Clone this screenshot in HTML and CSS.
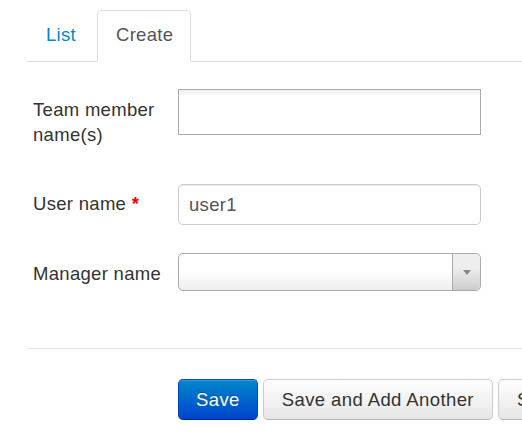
FILE: index.html
```html
<!DOCTYPE html>
<html>
<head>
<meta charset="utf-8">
<link rel="stylesheet" href="styles.css">
</head>
<body>
<div class="page">
  <ul class="tabs">
    <li class="tab"><a href="#">List</a></li>
    <li class="tab active"><a href="#">Create</a></li>
  </ul>
  <form class="form">
    <div class="group group-first">
      <label class="label">Team member name(s)</label>
      <div class="tags-box"></div>
    </div>
    <div class="group group-second">
      <label class="label label-user">User name <span class="req">*</span></label>
      <div class="text-input">user1</div>
    </div>
    <div class="group">
      <label class="label">Manager name</label>
      <div class="select-box">
        <span class="select-value"></span>
        <span class="select-arrow"><span class="tri"></span></span>
      </div>
    </div>
    <div class="actions">
      <button type="button" class="btn btn-primary">Save</button>
      <button type="button" class="btn">Save and Add Another</button>
      <button type="button" class="btn">Save and Continue Editing</button>
    </div>
  </form>
</div>
</body>
</html>
```
FILE: styles.css
```css
html, body {
  margin: 0;
  padding: 0;
  overflow: hidden;
  background: #fff;
}
body {
  font-family: "Liberation Sans", Arial, sans-serif;
  font-size: 18.5px;
  line-height: 25px;
  letter-spacing: 0.3px;
  color: #333;
}
.page {
  padding: 10px 0 0 27px;
}
.tabs {
  display: flex;
  margin: 0;
  padding: 0;
  list-style: none;
  border-bottom: 1px solid #ddd;
}
.tab {
  margin-bottom: -1px;
  margin-right: 3px;
}
.tab a {
  display: block;
  padding: 11px 17px 14px 18px;
  border: 1px solid transparent;
  border-radius: 5px 5px 0 0;
  color: #0088cc;
  text-decoration: none;
}
.tab.active a {
  border-color: #ddd;
  border-bottom-color: transparent;
  background: #fff;
  color: #555;
}
.form {
  margin: 0;
  padding-top: 27px;
}
.group {
  display: flex;
  align-items: flex-start;
  padding-left: 6px;
}
.group-first {
  margin-bottom: 37px;
}
.group-second {
  margin-bottom: 28px;
}
.label {
  width: 133px;
  flex: none;
  padding: 8px 12px 0 0;
}
.label-user {
  padding-top: 7px;
}
.req {
  color: #e00;
  font-weight: bold;
}
.tags-box {
  width: 301px;
  height: 44px;
  border: 1px solid #aaa;
  background: linear-gradient(to bottom, #eee 1%, #fff 15%);
}
.text-input {
  width: 281px;
  height: 39px;
  line-height: 39px;
  padding: 0 10px;
  border: 1px solid #ccc;
  border-radius: 5px;
  box-shadow: inset 0 1px 1px rgba(0,0,0,0.075);
  color: #555;
  background: #fff;
}
.select-box {
  width: 301px;
  height: 36px;
  display: flex;
  border: 1px solid #aaa;
  border-radius: 5px;
  background: linear-gradient(to bottom, #fff 0%, #fff 50%, #eee 100%);
}
.select-value {
  flex: 1;
}
.select-arrow {
  width: 27px;
  flex: none;
  border-left: 1px solid #aaa;
  border-radius: 0 5px 5px 0;
  background: linear-gradient(to top, #ccc 0%, #eee 60%);
  display: flex;
  align-items: center;
  justify-content: center;
}
.tri {
  width: 0;
  height: 0;
  border-left: 4px solid transparent;
  border-right: 4px solid transparent;
  border-top: 5px solid #888;
  margin-top: 1px;
}
.actions {
  display: flex;
  gap: 5px;
  margin-top: 57px;
  padding: 30px 0 0 151px;
  border-top: 1px solid #e5e5e5;
  white-space: nowrap;
}
.btn {
  flex: none;
  font-family: inherit;
  font-size: 18.5px;
  line-height: 25px;
  letter-spacing: 0.4px;
  padding: 7px 18px;
  border: 1px solid #ccc;
  border-bottom-color: #b3b3b3;
  border-radius: 5px;
  background: linear-gradient(to bottom, #fff, #e6e6e6);
  color: #333;
  box-shadow: inset 0 1px 0 rgba(255,255,255,0.2), 0 1px 2px rgba(0,0,0,0.05);
  margin: 0;
}
.btn-primary {
  padding: 7px 17px;
  color: #fff;
  background: linear-gradient(to bottom, #0088cc, #0044cc);
  border-color: #0044cc #0044cc #002a80;
  text-shadow: 0 -1px 0 rgba(0,0,0,0.25);
}
```
